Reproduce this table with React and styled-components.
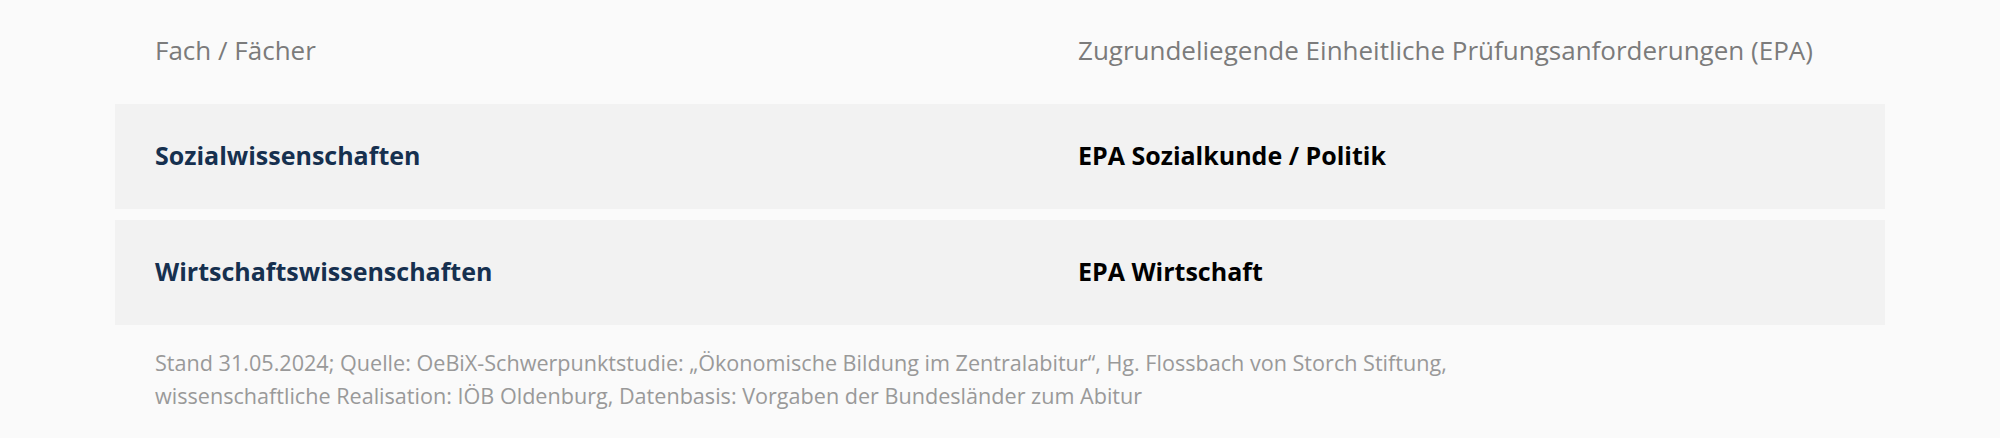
import React from 'react';
import styled, { createGlobalStyle } from 'styled-components';

const GlobalStyle = createGlobalStyle`
  body {
    margin: 0;
    background: #fafafa;
    font-family: "Open Sans", "Noto Sans", sans-serif;
  }
`;

const Section = styled.section`
  padding: 0 115px;
  background: #fafafa;
`;

const Table = styled.div`
  display: grid;
  grid-template-columns: 923px minmax(0, 1fr);
`;

const HeadCell = styled.div`
  height: 104px;
  display: flex;
  align-items: center;
  padding: 0 40px 4px;
  box-sizing: border-box;
  font-size: 26px;
  font-weight: 400;
  color: #7b7b7b;
  white-space: nowrap;
`;

const Cell = styled.div`
  height: 105px;
  display: flex;
  align-items: center;
  padding: 0 40px 3px;
  box-sizing: border-box;
  margin-bottom: 11px;
  background: #f2f2f2;
  font-size: 25px;
  font-weight: 700;
  color: ${p => (p.$subject ? '#16304f' : '#000')};
  white-space: nowrap;
`;

const Note = styled.p`
  margin: 0;
  padding: 10px 40px 0;
  font-size: 21.6px;
  line-height: 33px;
  color: #999;
`;

const rows = [
  ['Sozialwissenschaften', 'EPA Sozialkunde / Politik'],
  ['Wirtschaftswissenschaften', 'EPA Wirtschaft'],
];

export default function App() {
  return (
    <>
      <GlobalStyle />
      <Section>
        <Table>
          <HeadCell>Fach / Fächer</HeadCell>
          <HeadCell>Zugrundeliegende Einheitliche Prüfungsanforderungen (EPA)</HeadCell>
          {rows.map(([subject, epa]) => (
            <React.Fragment key={subject}>
              <Cell $subject>{subject}</Cell>
              <Cell>{epa}</Cell>
            </React.Fragment>
          ))}
        </Table>
        <Note>
          Stand 31.05.2024; Quelle: OeBiX-Schwerpunktstudie: „Ökonomische Bildung im Zentralabitur“, Hg. Flossbach von Storch Stiftung,
          <br />
          wissenschaftliche Realisation: IÖB Oldenburg, Datenbasis: Vorgaben der Bundesländer zum Abitur
        </Note>
      </Section>
    </>
  );
}
